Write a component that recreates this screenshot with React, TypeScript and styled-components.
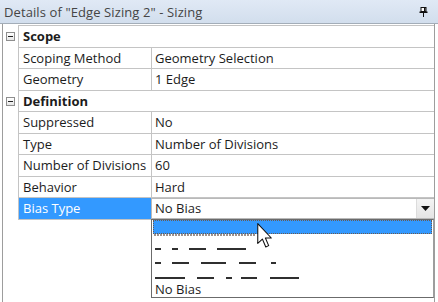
import * as React from 'react'
import styled, { createGlobalStyle } from 'styled-components'

const rows = [
  { section: 'Scope' },
  { label: 'Scoping Method', value: 'Geometry Selection' },
  { label: 'Geometry', value: '1 Edge' },
  { section: 'Definition' },
  { label: 'Suppressed', value: 'No' },
  { label: 'Type', value: 'Number of Divisions' },
  { label: 'Number of Divisions', value: '60' },
  { label: 'Behavior', value: 'Hard' },
]

// dash segments for the bias pictures, x from / to
const biasItems: number[][][] = [
  [[2, 8], [19, 25], [36, 53], [64, 93]],
  [[2, 8], [19, 36], [48, 73], [86, 103], [118, 123]],
  [[2, 32], [44, 61], [73, 79], [88, 104], [117, 146]],
]

function Details() {
  return (
    <Panel>
      <GlobalStyle />
      <TitleBar>
        <span>Details of "Edge Sizing 2" - Sizing</span>
        <svg width="9" height="10" viewBox="0 0 9 10">
          <rect x="2" y="0.5" width="5" height="4" fill="#fff" stroke="#111" />
          <rect x="5" y="1" width="1.5" height="3" fill="#111" />
          <rect x="0.5" y="4.5" width="8" height="1.5" fill="#111" />
          <rect x="4" y="6" width="1" height="4" fill="#111" />
        </svg>
      </TitleBar>
      <Grid>
        {rows.map((r, i) =>
          r.section ? (
            <Row key={i}>
              <Gutter>
                <Collapse />
              </Gutter>
              <Cells $first={i === 0}>
                <Section>{r.section}</Section>
              </Cells>
            </Row>
          ) : (
            <Row key={i}>
              <Gutter />
              <Cells>
                <Label>{r.label}</Label>
                <Value>{r.value}</Value>
              </Cells>
            </Row>
          )
        )}
        <Row>
          <Gutter />
          <Cells>
            <Label $selected>Bias Type</Label>
            <ComboCell>
              <Combo>
                <span>No Bias</span>
                <ArrowButton>
                  <svg width="9" height="5" viewBox="0 0 9 5">
                    <path d="M0 0 H9 L4.5 5 Z" fill="#111" />
                  </svg>
                </ArrowButton>
              </Combo>
              <DropList>
                <Item $h={16}>
                  <Highlight />
                  <svg width="110" height="2">
                    <line x1="1" y1="1" x2="102" y2="1" stroke="#7d6e66" strokeWidth="1.5" strokeDasharray="2 1" />
                  </svg>
                </Item>
                {biasItems.map((segs, i) => (
                  <Item key={i} $h={i === 0 ? 14 : 15}>
                    <svg width="160" height="15">
                      {segs.map(([a, b], j) => (
                        <line key={j} x1={a} y1="13" x2={b} y2="13" stroke="#2f2f2f" strokeWidth="2" />
                      ))}
                    </svg>
                  </Item>
                ))}
                <Item $h={17}>
                  <ItemText>No Bias</ItemText>
                </Item>
              </DropList>
            </ComboCell>
          </Cells>
        </Row>
        <Cursor width="16" height="25" viewBox="0 0 12 19">
          <path d="M0.5 0.5 V15.5 L4 12.2 L6.6 18.2 L8.8 17.2 L6.3 11.4 H10.8 Z" fill="#fff" stroke="#111" strokeWidth="0.8" strokeLinejoin="round" />
        </Cursor>
      </Grid>
    </Panel>
  )
}

const GlobalStyle = createGlobalStyle`
  html, body {
    margin: 0;
    padding: 0;
    background: #fff;
  }
  body {
    font-family: "Open Sans", "Noto Sans", "Liberation Sans", sans-serif;
  }
`

const Panel = styled.div`
  width: 438px;
  height: 302px;
  display: flex;
  flex-direction: column;
  overflow: hidden;
  background: #fff;
`

const TitleBar = styled.div`
  height: 23px;
  display: flex;
  align-items: center;
  justify-content: space-between;
  padding: 0 10px 0 4px;
  background: linear-gradient(#e0e9f5, #d2deed);
  border-bottom: 1px solid #a3adb8;
  color: #454545;
  font-size: 13px;
  letter-spacing: 0.1px;
`

const Grid = styled.div`
  flex: 1;
  position: relative;
  margin: 0 3px 0 2px;
  padding-top: 1px;
  border-left: 1px solid #9d9d9d;
  border-right: 1px solid #9d9d9d;
  font-size: 13px;
  color: #1c1c1c;
`

const Row = styled.div`
  display: flex;
`

const Gutter = styled.div`
  width: 15px;
  flex: none;
  display: flex;
  align-items: center;
  justify-content: center;
`

const Collapse = styled.div`
  width: 9px;
  height: 9px;
  box-sizing: border-box;
  border: 1px solid #8e8e8e;
  background: linear-gradient(#ffffff, #e6e6e6);
  position: relative;

  &::after {
    content: '';
    position: absolute;
    left: 1px;
    right: 1px;
    top: 3px;
    height: 1px;
    background: #222;
  }
`

const Cells = styled.div<{ $first?: boolean }>`
  flex: 1;
  display: flex;
  box-sizing: border-box;
  border-left: 1px solid #c4c4c4;
  border-bottom: 1px solid #c4c4c4;
  border-top: ${(p) => (p.$first ? '1px solid #c4c4c4' : 'none')};
  height: ${(p) => (p.$first ? '22.5px' : '21.5px')};
`

const Section = styled.div`
  flex: 1;
  display: flex;
  align-items: center;
  padding-left: 4px;
  font-weight: bold;
`

const Label = styled.div<{ $selected?: boolean }>`
  width: 133px;
  flex: none;
  display: flex;
  align-items: center;
  padding-left: 4px;
  box-sizing: border-box;
  border-right: 1px solid #c4c4c4;
  white-space: nowrap;
  background: ${(p) => (p.$selected ? '#3399ff' : 'transparent')};
  color: ${(p) => (p.$selected ? '#fff' : 'inherit')};
`

const Value = styled.div`
  flex: 1;
  display: flex;
  align-items: center;
  padding-left: 3px;
  white-space: nowrap;
`

const ComboCell = styled.div`
  flex: 1;
  position: relative;
`

const Combo = styled.div`
  height: 100%;
  box-sizing: border-box;
  display: flex;
  align-items: center;
  justify-content: space-between;
  padding-left: 3px;
  border: 1px solid #b9b9b9;
  border-right: none;
  margin-left: -1px;
  background: #fff;
`

const ArrowButton = styled.div`
  width: 17px;
  height: 100%;
  display: flex;
  align-items: center;
  justify-content: center;
  background: linear-gradient(#f4f4f4, #e4e4e4);
  border-left: 1px solid #dcdcdc;
`

const DropList = styled.div`
  position: absolute;
  top: 100%;
  left: -1px;
  right: 0;
  z-index: 2;
  background: #fff;
  border: 1px solid #6b6b6b;
  border-right-color: #9d9d9d;
  padding: 0 1px;
`

const Item = styled.div<{ $h: number }>`
  height: ${(p) => p.$h}px;
  display: flex;
  flex-direction: column;
  justify-content: flex-end;
  box-sizing: border-box;

  svg {
    display: block;
  }
`

const Highlight = styled.div`
  flex: 1;
  background: #3399ff;
  outline: 1px dotted #6a5a50;
  outline-offset: -1px;
`

const ItemText = styled.span`
  padding-left: 2px;
  line-height: 16px;
`

const Cursor = styled.svg`
  position: absolute;
  left: 254px;
  top: 199px;
  z-index: 3;
`

export default Details
